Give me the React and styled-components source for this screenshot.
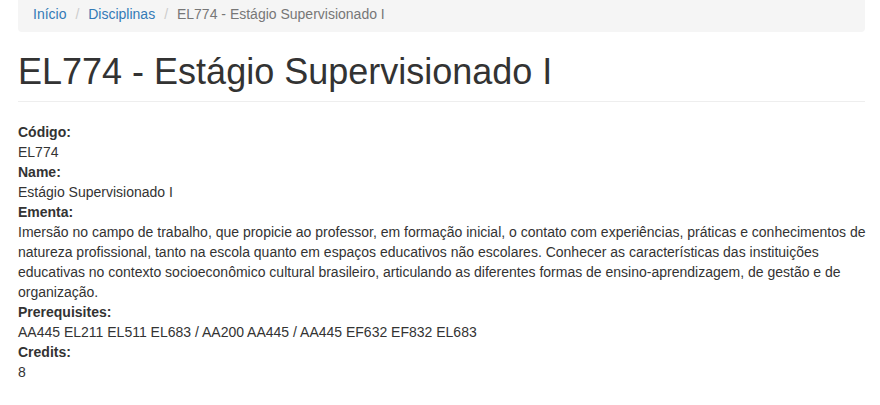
import React from "react";
import styled, { createGlobalStyle } from "styled-components";

const GlobalStyle = createGlobalStyle`
  * { box-sizing: border-box; }
  body {
    margin: 0;
    background: #fff;
    font-family: "Liberation Sans", Arial, Helvetica, sans-serif;
    font-size: 14px;
    line-height: 20px;
    color: #333;
  }
`;

const Container = styled.div`
  padding: 0 15px 0 18px;
`;

const Breadcrumb = styled.ol`
  margin: 0 0 20px;
  padding: 4px 15px 8px;
  list-style: none;
  background-color: #f5f5f5;
  border-radius: 0 0 4px 4px;
  display: flex;
  gap: 4px;

  li + li::before {
    content: "/\\00a0";
    padding: 0 5px;
    color: #ccc;
  }
`;

const Crumb = styled.li`
  color: ${(props) => (props.$active ? "#777" : "#337ab7")};
`;

const CrumbLink = styled.a`
  color: #337ab7;
  text-decoration: none;
`;

const PageHeader = styled.div`
  margin: 0 0 20px;
  padding-bottom: 9px;
  border-bottom: 1px solid #eee;
`;

const Title = styled.h1`
  margin: 0;
  font-size: 36px;
  font-weight: 500;
  line-height: 1.1;
  color: #333;
`;

const List = styled.dl`
  margin: 0 -8px 20px 0;
`;

const Term = styled.dt`
  font-weight: bold;
`;

const Value = styled.dd`
  margin: 0;
`;

const fields = [
  ["Código:", "EL774"],
  ["Name:", "Estágio Supervisionado I"],
  [
    "Ementa:",
    "Imersão no campo de trabalho, que propicie ao professor, em formação inicial, o contato com experiências, práticas e conhecimentos de natureza profissional, tanto na escola quanto em espaços educativos não escolares. Conhecer as características das instituições educativas no contexto socioeconômico cultural brasileiro, articulando as diferentes formas de ensino-aprendizagem, de gestão e de organização.",
  ],
  ["Prerequisites:", "AA445 EL211 EL511 EL683 / AA200 AA445 / AA445 EF632 EF832 EL683"],
  ["Credits:", "8"],
];

const App = () => {
  return (
    <Container>
      <GlobalStyle />
      <Breadcrumb>
        <Crumb>
          <CrumbLink href="#">Início</CrumbLink>
        </Crumb>
        <Crumb>
          <CrumbLink href="#">Disciplinas</CrumbLink>
        </Crumb>
        <Crumb $active>EL774 - Estágio Supervisionado I</Crumb>
      </Breadcrumb>
      <PageHeader>
        <Title>EL774 - Estágio Supervisionado I</Title>
      </PageHeader>
      <List>
        {fields.map(([term, value]) => (
          <React.Fragment key={term}>
            <Term>{term}</Term>
            <Value>{value}</Value>
          </React.Fragment>
        ))}
      </List>
    </Container>
  );
};

export default App;
